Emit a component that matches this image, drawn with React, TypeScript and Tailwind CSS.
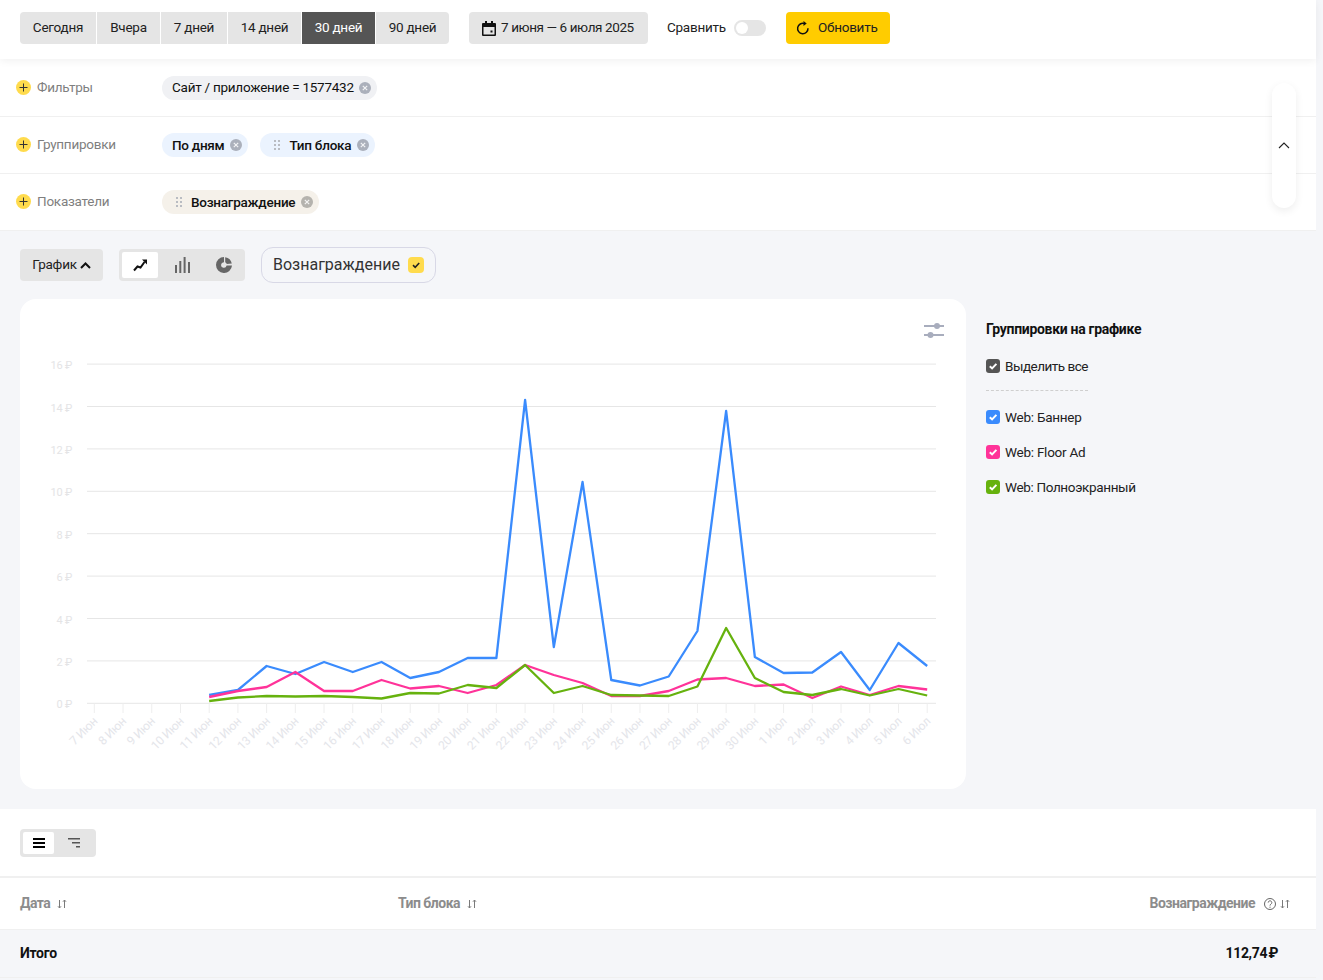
import React from "react";

const font = "font-['Roboto',sans-serif]";

const blue = [695,690,666,674,662,672,662,678,672,658,658,400,647,482,680,685.5,676.5,631,411,657,673,672.5,652,690,643,666];
const pink = [697,691,687,672,691,691,680,688.5,686,693,685,665,675,683,696,696,691,679.5,678,686,684.5,698,686.5,695,686,689.5];
const green = [701,697.5,696,696.5,696,697,698.5,693,693.5,685,688,665,693,686,695,695.5,696,686.5,628,678,692,695,689,695.5,689,695.5];

const labels = ["7 Июн","8 Июн","9 Июн","10 Июн","11 Июн","12 Июн","13 Июн","14 Июн","15 Июн","16 Июн","17 Июн","18 Июн","19 Июн","20 Июн","21 Июн","22 Июн","23 Июн","24 Июн","25 Июн","26 Июн","27 Июн","28 Июн","29 Июн","30 Июн","1 Июл","2 Июл","3 Июл","4 Июл","5 Июл","6 Июл"];

const X0 = 94.3 - 20;
const DX = 28.72;
const Y = (y: number) => y - 299;
const pts = (a: number[]) => a.map((y, i) => `${X0 + (i + 4) * DX},${Y(y)}`).join(" ");

function Chart() {
  const yLines = [16, 14, 12, 10, 8, 6, 4, 2, 0];
  return (
    <svg width="946" height="490" className="block">
      {yLines.map((v) => {
        const y = Y(703.3 - v * 21.2);
        return (
          <g key={v}>
            <line x1="67" x2="916" y1={y} y2={y} stroke="#e6e6e6" strokeWidth="1" />
            <text x="52" y={y + 5} textAnchor="end" fontSize="11" fill="#e4e4e6" fontFamily="Roboto, sans-serif">{v} ₽</text>
          </g>
        );
      })}
      {labels.map((l, i) => {
        const x = X0 + i * DX;
        return (
          <g key={l}>
            <line x1={x} x2={x} y1={Y(703.3)} y2={Y(713)} stroke="#eeeeee" strokeWidth="1" />
            <text
              x={x + 4}
              y={Y(722)}
              textAnchor="end"
              fontSize="12"
              fill="#e4e5ea"
              fontFamily="Roboto, sans-serif"
              transform={`rotate(-45 ${x + 4} ${Y(722)})`}
            >
              {l}
            </text>
          </g>
        );
      })}
      <polyline points={pts(blue)} fill="none" stroke="#3a8bfd" strokeWidth="2.3" strokeLinejoin="round" />
      <polyline points={pts(pink)} fill="none" stroke="#ff3399" strokeWidth="2.3" strokeLinejoin="round" />
      <polyline points={pts(green)} fill="none" stroke="#66b20e" strokeWidth="2.3" strokeLinejoin="round" />
    </svg>
  );
}

function Plus() {
  return (
    <span className="flex h-[15px] w-[15px] shrink-0 items-center justify-center rounded-full bg-[#ffdb4d]">
      <svg width="9" height="9" viewBox="0 0 9 9"><path d="M4.5 0.5v8M0.5 4.5h8" stroke="#333" strokeWidth="1" /></svg>
    </span>
  );
}

function Close({ color = "#abb0bb" }: { color?: string }) {
  return (
    <svg width="12" height="12" viewBox="0 0 12 12" className="shrink-0">
      <circle cx="6" cy="6" r="6" fill={color} />
      <path d="M3.8 3.8l4.4 4.4M8.2 3.8l-4.4 4.4" stroke="#fff" strokeWidth="1.2" opacity="0.85" />
    </svg>
  );
}

function Grip() {
  return (
    <svg width="6" height="10" viewBox="0 0 6 10" className="shrink-0" fill="#b9bcc2">
      {[0, 4, 8].map((y) => (
        <g key={y}>
          <rect x="0" y={y} width="2" height="2" />
          <rect x="4" y={y} width="2" height="2" />
        </g>
      ))}
    </svg>
  );
}

function Row({ label, children, first }: { label: string; children: React.ReactNode; first?: boolean }) {
  return (
    <div className={`flex items-center pl-4 border-b border-[#f0f0f0] ${first ? "h-[58px]" : "h-[57px]"}`}>
      <div className={`flex w-[146px] items-center gap-[6px] ${first ? "" : "mb-[2px]"}`}>
        <Plus />
        <span className="text-[#7f7f7f]">{label}</span>
      </div>
      <div className="flex items-center gap-3">{children}</div>
    </div>
  );
}

function Check({ bg, stroke = "#fff" }: { bg: string; stroke?: string }) {
  return (
    <span className={`flex h-[14px] w-[14px] shrink-0 items-center justify-center rounded-[3px] ${bg}`}>
      <svg width="10" height="10" viewBox="0 0 10 10"><path d="M1.8 5.2l2.3 2.2L8.4 2.9" fill="none" stroke={stroke} strokeWidth="2" /></svg>
    </span>
  );
}

function SortArrows() {
  return (
    <svg width="10" height="10" viewBox="0 0 10 10" className="shrink-0" fill="none" stroke="#7a7a7a" strokeWidth="1">
      <path d="M2.5 1v8M1 7.3l1.5 1.7L4 7.3" />
      <path d="M7.5 9V1M6 2.7L7.5 1 9 2.7" />
    </svg>
  );
}

const periods = ["Сегодня", "Вчера", "7 дней", "14 дней", "30 дней", "90 дней"];
const widths = ["w-[76px]", "w-[63px]", "w-[66px]", "w-[73px]", "w-[73px]", "w-[73px]"];

export default function App() {
  return (
    <div className={`${font} relative h-[980px] w-[1323px] overflow-hidden bg-[#f5f6f9] text-[13.5px] tracking-[-0.25px] text-black`}>
      <div className="w-[1316px]">
        {/* Top bar */}
        <div className="relative z-10 flex h-[59px] items-start bg-white pl-5 pt-3 shadow-[0_2px_8px_rgba(0,0,0,0.06)]">
          <div className="flex h-8 gap-px overflow-hidden rounded-[4px]">
            {periods.map((p, i) => (
              <div
                key={p}
                className={`flex items-center justify-center pb-[2px] ${widths[i]} ${i === 4 ? "bg-[#555555] text-white" : "bg-[#e5e5e5] text-[#222]"}`}
              >
                {p}
              </div>
            ))}
          </div>
          <div className="ml-5 flex h-8 w-[179px] items-center gap-[5px] rounded-[4px] bg-[#e5e5e5] pl-[13px] text-[#222]">
            <svg width="14" height="15" viewBox="0 0 14 15">
              <path d="M3 0h2v2h4V0h2v2h2a1 1 0 0 1 1 1v11a1 1 0 0 1-1 1H1a1 1 0 0 1-1-1V3a1 1 0 0 1 1-1h2z M1.5 6v7.5h11V6z" fill="#111" fillRule="evenodd" />
              <rect x="8.5" y="9.5" width="2" height="2" fill="#111" />
            </svg>
            <span className="mb-[2px] tracking-[-0.4px]">7 июня — 6 июля 2025</span>
          </div>
          <div className="ml-[19px] flex h-8 items-center">
            <span className="mb-[2px] w-[59px] text-[#222]">Сравнить</span>
            <div className="ml-2 flex h-4 w-8 items-center rounded-full bg-[#e5e5e5] pl-[2px]">
              <span className="h-3 w-3 rounded-full bg-white" />
            </div>
          </div>
          <div className="ml-5 flex h-8 w-[104px] items-center gap-[8px] rounded-[4px] bg-[#ffcc00] pl-[10px] text-[#222]">
            <svg width="14" height="14" viewBox="0 0 14 14" fill="none" stroke="#111" strokeWidth="1.5">
              <path d="M8.5 2.6A5.2 5.2 0 1 0 12 7.3" />
              <path d="M7.5 0l3.2 2.5L7.5 5z" fill="#111" stroke="none" />
            </svg>
            <span className="mb-[2px]">Обновить</span>
          </div>
        </div>

        {/* Filters */}
        <div className="relative bg-white">
          <Row label="Фильтры" first>
            <div className="flex h-6 items-center gap-[5px] rounded-full bg-[#f0f1f4] pl-[10px] pr-[6px] text-[#111]">
              <span>Сайт / приложение = 1577432</span>
              <Close />
            </div>
          </Row>
          <Row label="Группировки">
            <div className="flex h-6 items-center gap-[6px] rounded-full bg-[#ebf3fe] pl-[10px] pr-[6px] font-medium text-[#111]">
              <span>По дням</span>
              <Close />
            </div>
            <div className="flex h-6 items-center gap-[6px] rounded-full bg-[#ebf3fe] pl-[14px] pr-[6px] font-medium text-[#111]">
              <Grip />
              <span className="ml-[3px]">Тип блока</span>
              <Close />
            </div>
          </Row>
          <Row label="Показатели">
            <div className="flex h-6 items-center gap-[6px] rounded-full bg-[#f5f1ea] pl-[14px] pr-[6px] font-medium text-[#111]">
              <Grip />
              <span className="ml-[3px]">Вознаграждение</span>
              <Close color="#b5b3ae" />
            </div>
          </Row>
          <div className="absolute right-[20px] top-[24px] flex h-[125px] w-6 items-center justify-center rounded-full bg-white shadow-[0_3px_8px_rgba(0,0,0,0.07)]">
            <svg width="12" height="7" viewBox="0 0 12 7" fill="none" stroke="#222" strokeWidth="1.1"><path d="M1 6l5-5 5 5" /></svg>
          </div>
        </div>

        {/* Chart section */}
        <div className="bg-[#f5f6f9] pl-5 pt-4 pb-5">
          <div className="flex h-9 items-center">
            <div className="flex h-8 w-[83px] items-center justify-center gap-[3px] rounded-[4px] bg-[#e5e5e5] text-[#222]">
              <span className="mb-[2px]">График</span>
              <svg width="11" height="7" viewBox="0 0 11 7" fill="none" stroke="#111" strokeWidth="2"><path d="M1 6l4.5-4.5L10 6" /></svg>
            </div>
            <div className="ml-4 flex h-8 w-[126px] items-center rounded-[4px] bg-[#e5e5e5] p-[3px]">
              <div className="flex h-[26px] w-9 items-center justify-center rounded-[2px] bg-white">
                <svg width="15" height="14" viewBox="0 0 15 14" fill="none" stroke="#111" strokeWidth="2">
                  <path d="M1 12.5l3.5-4 3 1L11.5 4" />
                  <path d="M9 1.5H14V6.5z" fill="#111" stroke="none" />
                </svg>
              </div>
              <div className="flex h-[26px] w-[48px] items-center justify-center">
                <svg width="15" height="16" viewBox="0 0 15 16" fill="#666">
                  <rect x="0" y="8" width="2" height="8" />
                  <rect x="4.3" y="4" width="2" height="12" />
                  <rect x="8.6" y="0" width="2" height="16" />
                  <rect x="13" y="5" width="2" height="11" />
                </svg>
              </div>
              <div className="flex h-[26px] w-9 items-center justify-center">
                <svg width="16" height="16" viewBox="0 0 16 16">
                  <path d="M8 0a8 8 0 1 0 8 8.6H10.6A2.8 2.8 0 1 1 8 5.2z" fill="#666" />
                  <path d="M9.2 0.2A8 8 0 0 1 15.8 6.6L10.8 7A3 3 0 0 0 9.2 5.2z" fill="#666" />
                </svg>
              </div>
            </div>
            <div className="ml-4 flex h-9 w-[175px] items-center gap-2 rounded-[12px] border border-[#d8d8e6] pl-[11px] text-[16px] tracking-normal text-[#333]">
              <span>Вознаграждение</span>
              <span className="flex h-4 w-4 items-center justify-center rounded-[4px] bg-[#ffdb4d]">
                <svg width="10" height="10" viewBox="0 0 10 10"><path d="M2 5.2l2.2 2.1L8.2 3" fill="none" stroke="#222" strokeWidth="1.6" /></svg>
              </span>
            </div>
          </div>

          <div className="mt-4 flex">
            <div className="relative h-[490px] w-[946px] rounded-[16px] bg-white">
              <Chart />
              <svg width="20" height="18" viewBox="0 0 20 18" className="absolute left-[904px] top-[23px]" fill="#a8adbd">
                <rect x="0" y="3" width="20" height="2" />
                <circle cx="13" cy="4" r="3" />
                <rect x="0" y="12" width="20" height="2" />
                <circle cx="6.5" cy="13" r="3" />
              </svg>
            </div>
            <div className="ml-5 pt-[20px]">
              <div className="text-[14px] font-bold leading-5 tracking-[-0.3px] text-[#111]">Группировки на графике</div>
              <div className="mt-[17px] flex h-5 items-center gap-[5px] text-[#222]">
                <Check bg="bg-[#555555]" />
                <span className="tracking-[-0.5px]">Выделить все</span>
              </div>
              <div className="mt-[14px] w-[102px] border-t border-dashed border-[#cfcfcf]" />
              <div className="mt-[16px] flex h-5 items-center gap-[5px] text-[#222]">
                <Check bg="bg-[#3a8bfd]" />
                <span>Web: Баннер</span>
              </div>
              <div className="mt-[15px] flex h-5 items-center gap-[5px] text-[#222]">
                <Check bg="bg-[#ff3399]" />
                <span>Web: Floor Ad</span>
              </div>
              <div className="mt-[15px] flex h-5 items-center gap-[5px] text-[#222]">
                <Check bg="bg-[#66b20e]" />
                <span className="tracking-[-0.35px]">Web: Полноэкранный</span>
              </div>
            </div>
          </div>
        </div>

        {/* Table */}
        <div className="bg-white">
          <div className="flex h-[69px] items-center pl-5 border-b-2 border-[#f0f0f0]">
            <div className="flex h-7 w-[76px] items-center rounded-[4px] bg-[#e5e5e5] p-[3px]">
              <div className="flex h-[22px] w-8 items-center justify-center rounded-[2px] bg-white">
                <svg width="12" height="10" viewBox="0 0 12 10" fill="#000">
                  <rect y="0" width="12" height="2" />
                  <rect y="4" width="12" height="2" />
                  <rect y="8" width="12" height="2" />
                </svg>
              </div>
              <div className="flex h-[22px] w-[40px] items-center justify-center">
                <svg width="12" height="10" viewBox="0 0 12 10" fill="#555">
                  <rect y="0" width="12" height="1.5" />
                  <rect x="4" y="4" width="8" height="1.5" />
                  <rect x="8" y="8" width="4" height="1.5" />
                </svg>
              </div>
            </div>
          </div>
          <div className="flex h-[52px] items-center border-b border-[#f0f0f0] pl-5 pr-[26px] text-[14px] font-bold tracking-[-0.5px] text-[#8c8c8c]">
            <div className="flex w-[378px] items-center gap-[7px]">
              <span>Дата</span>
              <SortArrows />
            </div>
            <div className="flex items-center gap-[7px]">
              <span>Тип блока</span>
              <SortArrows />
            </div>
            <div className="ml-auto flex items-center gap-[3px]">
              <span>Вознаграждение</span>
              <svg width="14" height="14" viewBox="0 0 14 14" fill="none" stroke="#666" strokeWidth="1" className="ml-[5px]">
                <circle cx="7" cy="7" r="5.5" />
                <path d="M5.2 5.6a1.8 1.8 0 1 1 2.8 1.5c-.7.4-1 .8-1 1.5M7 9.7v1.1" />
              </svg>
              <SortArrows />
            </div>
          </div>
          <div className="flex h-[48px] items-center justify-between border-b border-[#f0f0f0] bg-[#f5f6f9] pl-5 pr-[38px] text-[14px] font-bold tracking-[-0.3px] text-[#111]">
            <span>Итого</span>
            <span className="[word-spacing:-2px]">112,74 ₽</span>
          </div>
        </div>
      </div>
    </div>
  );
}
